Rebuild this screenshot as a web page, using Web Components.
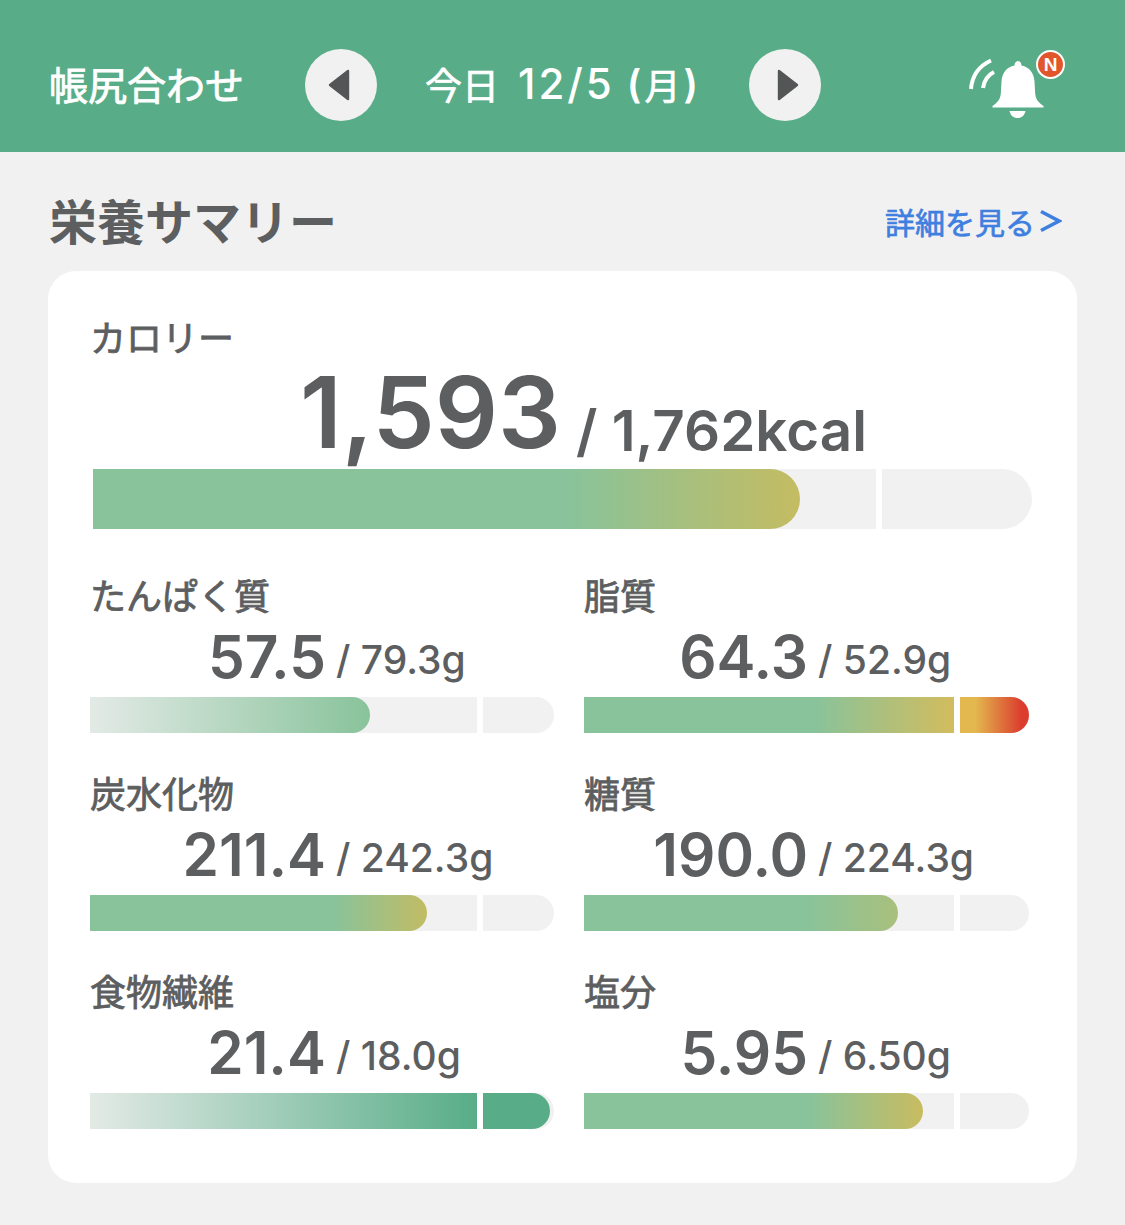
<!DOCTYPE html>
<html lang="ja">
<head>
<meta charset="utf-8">
<style>
  html, body { margin: 0; padding: 0; background: #f1f1f1; }
  body { width: 1125px; height: 1225px; overflow: hidden; font-family: "Noto Sans CJK JP", "Liberation Sans", sans-serif; color: #5c5e60; }
</style>
</head>
<body>
<app-header></app-header>
<summary-section>
  <nutrient-total slot="total" label="カロリー" value="1,593" goal="1,762kcal"></nutrient-total>
  <nutrient-item label="たんぱく質" value="57.5" goal="79.3g" kind="low" fill="280" first="387" second="71" split="236"></nutrient-item>
  <nutrient-item label="脂質" value="64.3" goal="52.9g" kind="over" fill="445" first="370" second="69" split="224"></nutrient-item>
  <nutrient-item label="炭水化物" value="211.4" goal="242.3g" kind="carb" fill="337" first="387" second="71" split="236"></nutrient-item>
  <nutrient-item label="糖質" value="190.0" goal="224.3g" kind="sugar" fill="314" first="370" second="69" split="224"></nutrient-item>
  <nutrient-item label="食物繊維" value="21.4" goal="18.0g" kind="full" fill="460" first="387" second="71" split="236"></nutrient-item>
  <nutrient-item label="塩分" value="5.95" goal="6.50g" kind="salt" fill="339" first="370" second="69" split="224"></nutrient-item>
</summary-section>

<script>
// 丸い矢印ボタン
class RoundButton extends HTMLElement {
  constructor() {
    super();
    this.attachShadow({ mode: 'open' });
    const prev = this.getAttribute('dir') === 'prev';
    this.shadowRoot.innerHTML = `
      <style>
        :host { display: flex; width: 72px; height: 72px; border-radius: 50%; background: #f1f1f1; align-items: center; justify-content: center; flex: none; }
        svg { display: block; margin-left: ${prev ? '-5px' : '5px'}; }
      </style>
      <svg width="22" height="32" viewBox="0 0 22 32">
        <path d="${prev ? 'M20 2 L2 16 L20 30 Z' : 'M2 2 L20 16 L2 30 Z'}" fill="#545556" stroke="#545556" stroke-width="2.4" stroke-linejoin="round"/>
      </svg>`;
  }
}
customElements.define('round-button', RoundButton);

// 通知ベル
class BellIcon extends HTMLElement {
  constructor() {
    super();
    this.attachShadow({ mode: 'open' });
    this.shadowRoot.innerHTML = `
      <style>
        :host { display: block; position: relative; width: 97px; height: 66px; flex: none; }
        svg { display: block; }
        .badge {
          position: absolute; right: 0; top: -5px; width: 25px; height: 25px; border: 2.5px solid #fff; border-radius: 50%;
          background: #e2562c; color: #fff; font: bold 19px/25px "Liberation Sans", sans-serif; text-align: center;
        }
      </style>
      <svg width="97" height="66" viewBox="968 55 97 66">
        <path d="M1017.5 61c2.5 0 4 2 4 4.500c8 1.500 12.500 8 13 16l.7 12c.4 6 3.500 9 8.300 12.500v1.500h-51v-1.500c4.800-3.500 7.900-6.500 8.300-12.500l.7-12c.5-8 5-14.500 13-16c0-2.500 1.500-4.500 4-4.500z" fill="#fff"/>
        <path d="M1009.500 111h16c-1 4.500-4 7-8 7s-7-2.500-8-7z" fill="#fff"/>
        <path d="M971 89c1-13 8-23 20-28.500" fill="none" stroke="#fff" stroke-width="4"/>
        <path d="M983 88c1-7 5-13 11-16" fill="none" stroke="#fff" stroke-width="4"/>
      </svg>
      <span class="badge">N</span>`;
  }
}
customElements.define('bell-icon', BellIcon);

// 上部の緑ヘッダー
class AppHeader extends HTMLElement {
  constructor() {
    super();
    this.attachShadow({ mode: 'open' });
    this.shadowRoot.innerHTML = `
      <style>
        :host { display: flex; align-items: center; height: 152px; padding: 18px 60px 0 49px; box-sizing: border-box; background: #58ad88; color: #fff; }
        .title { font-size: 39px; line-height: 1; width: 193px; margin: -4px 63px 0 0; white-space: nowrap; -webkit-text-stroke: .8px #fff; }
        .date { display: flex; align-items: center; width: 276px; margin: -2px 48px 0; white-space: nowrap; font-size: 37px; line-height: 44px; -webkit-text-stroke: .7px #fff; }
        .date .num { font: 500 42px/44px Inter, sans-serif; letter-spacing: 3px; margin-left: 19px; -webkit-text-stroke: 0; }
        .date .paren { font: 600 39px/44px Inter, sans-serif; -webkit-text-stroke: 0; }
        .date .day { font-size: 36px; margin: 0 3px; }
        bell-icon { margin-left: auto; margin-top: 6px; }
      </style>
      <div class="title">帳尻合わせ</div>
      <round-button dir="prev"></round-button>
      <div class="date"><span>今日</span><span class="num">12/5</span><span class="paren" style="margin-left:12px">(</span><span class="day">月</span><span class="paren">)</span></div>
      <round-button dir="next"></round-button>
      <bell-icon></bell-icon>`;
  }
}
customElements.define('app-header', AppHeader);

// 進捗バー  gradient は kind で切り替え
const BAR_FILLS = {
  cal: 'linear-gradient(90deg, #88c39b 0, #88c39b 67%, #c4bc62 100%)',
  low: 'linear-gradient(90deg, #e3eae6 0, #88c39b 100%)',
  over: 'linear-gradient(90deg, #88c39b 0, #88c39b 62%, #d2bc5e 100%)',
  carb: 'linear-gradient(90deg, #88c39b 0, #88c39b 72%, #c2bc64 100%)',
  sugar: 'linear-gradient(90deg, #88c39b 0, #88c39b 70%, #a9c07d 100%)',
  full: 'linear-gradient(90deg, #e3eae6 0, #58ad88 84%, #58ad88 100%)',
  salt: 'linear-gradient(90deg, #88c39b 0, #88c39b 66%, #c8bc60 100%)'
};

class NutrientBar extends HTMLElement {
  constructor() {
    super();
    this.attachShadow({ mode: 'open' });
    const kind = this.getAttribute('kind');
    const first = this.getAttribute('first');
    const second = this.getAttribute('second');
    const fill = this.getAttribute('fill');
    const over = kind === 'over' ? `<i class="over" style="left:${+first + 6}px;width:69px"></i>` : '';
    this.shadowRoot.innerHTML = `
      <style>
        :host { display: block; height: var(--bar-h, 36px); position: relative; }
        .track { display: flex; gap: 6px; height: 100%; }
        .seg { background: #f1f1f1; }
        .seg.end { border-radius: 0 calc(var(--bar-h, 36px) / 2) calc(var(--bar-h, 36px) / 2) 0; }
        .fill, .gap, .over { position: absolute; top: 0; bottom: 0; display: block; }
        .fill { left: 0; border-radius: 0 calc(var(--bar-h, 36px) / 2) calc(var(--bar-h, 36px) / 2) 0; }
        .gap { width: 6px; background: #fff; }
        .over { border-radius: 0 18px 18px 0; background: linear-gradient(90deg, #e3b84f 0, #e3b84f 22%, #db3c2d 90%); }
      </style>
      <div class="track">
        <div class="seg" style="width:${first}px"></div>
        <div class="seg end" style="width:${second}px"></div>
      </div>
      <i class="fill" style="width:${kind === 'over' ? first : fill}px;background:${BAR_FILLS[kind]}${kind === 'over' ? ';border-radius:0' : ''}"></i>
      ${over}
      <i class="gap" style="left:${first}px"></i>`;
  }
}
customElements.define('nutrient-bar', NutrientBar);

// カロリー行
class NutrientTotal extends HTMLElement {
  constructor() {
    super();
    this.attachShadow({ mode: 'open' });
    this.shadowRoot.innerHTML = `
      <style>
        :host { display: block; }
        .label { font-size: 36px; line-height: 46px; -webkit-text-stroke: .8px #5c5e60; }
        .nums { display: grid; grid-template-columns: 471px 1fr; column-gap: 15px; align-items: end; height: 110px; font-family: Inter, "Liberation Sans", sans-serif; font-weight: 600; white-space: nowrap; }
        .value { font-size: 99px; line-height: 106px; margin-bottom: 4px; text-align: right; }
        .goal { font-size: 56.500px; line-height: 66px; margin-bottom: 5px; }
        nutrient-bar { --bar-h: 60px; margin-left: 3px; }
      </style>
      <div class="label">${this.getAttribute('label')}</div>
      <div class="nums"><span class="value">${this.getAttribute('value')}</span><span class="goal">/ ${this.getAttribute('goal')}</span></div>
      <nutrient-bar kind="cal" fill="707" first="783" second="150"></nutrient-bar>`;
  }
}
customElements.define('nutrient-total', NutrientTotal);

// 栄養素ごとの行
class NutrientItem extends HTMLElement {
  constructor() {
    super();
    this.attachShadow({ mode: 'open' });
    const a = n => this.getAttribute(n);
    this.shadowRoot.innerHTML = `
      <style>
        :host { display: block; height: 198px; }
        .label { font-size: 36px; line-height: 46px; -webkit-text-stroke: .8px #5c5e60; }
        .nums { display: grid; grid-template-columns: ${a('split')}px 1fr; column-gap: 10px; align-items: end; height: 72px; margin-bottom: 8px; font-family: Inter, "Liberation Sans", sans-serif; white-space: nowrap; }
        .value { font-size: 58.500px; font-weight: 600; line-height: 62px; margin-bottom: 1px; text-align: right; }
        .goal { font-size: 39px; font-weight: 500; line-height: 44px; margin-bottom: 7px; }
      </style>
      <div class="label">${a('label')}</div>
      <div class="nums"><span class="value">${a('value')}</span><span class="goal">/ ${a('goal')}</span></div>
      <nutrient-bar kind="${a('kind')}" fill="${a('fill')}" first="${a('first')}" second="${a('second')}"></nutrient-bar>`;
  }
}
customElements.define('nutrient-item', NutrientItem);

// 栄養サマリー
class SummarySection extends HTMLElement {
  constructor() {
    super();
    this.attachShadow({ mode: 'open' });
    this.shadowRoot.innerHTML = `
      <style>
        :host { display: block; padding: 0 48px; }
        .head { display: flex; box-sizing: border-box; justify-content: space-between; align-items: center; height: 119px; padding: 18px 15px 0 1px; }
        h2 { margin: -4px 0 0; font-size: 48px; font-weight: 700; line-height: 1; white-space: nowrap; }
        .more { color: #3f7fe0; font-size: 30px; line-height: 1; display: flex; align-items: center; gap: 4px; -webkit-text-stroke: .7px #3f7fe0; }
        .more svg { display: block; }
        .card { box-sizing: border-box; height: 912px; background: #fff; border-radius: 28px; padding: 42px 45px 0 42px; }
        .grid { display: grid; grid-template-columns: 464px 445px; column-gap: 30px; margin-top: 42px; }
      </style>
      <div class="head">
        <h2>栄養サマリー</h2>
        <div class="more">詳細を見る<svg width="23" height="24" viewBox="0 0 23 24"><path d="M2 2.500 L20 12 L2 21.500" fill="none" stroke="#3f7fe0" stroke-width="3.600"/></svg></div>
      </div>
      <div class="card">
        <slot name="total"></slot>
        <div class="grid"><slot></slot></div>
      </div>`;
  }
}
customElements.define('summary-section', SummarySection);
</script>
</body>
</html>
